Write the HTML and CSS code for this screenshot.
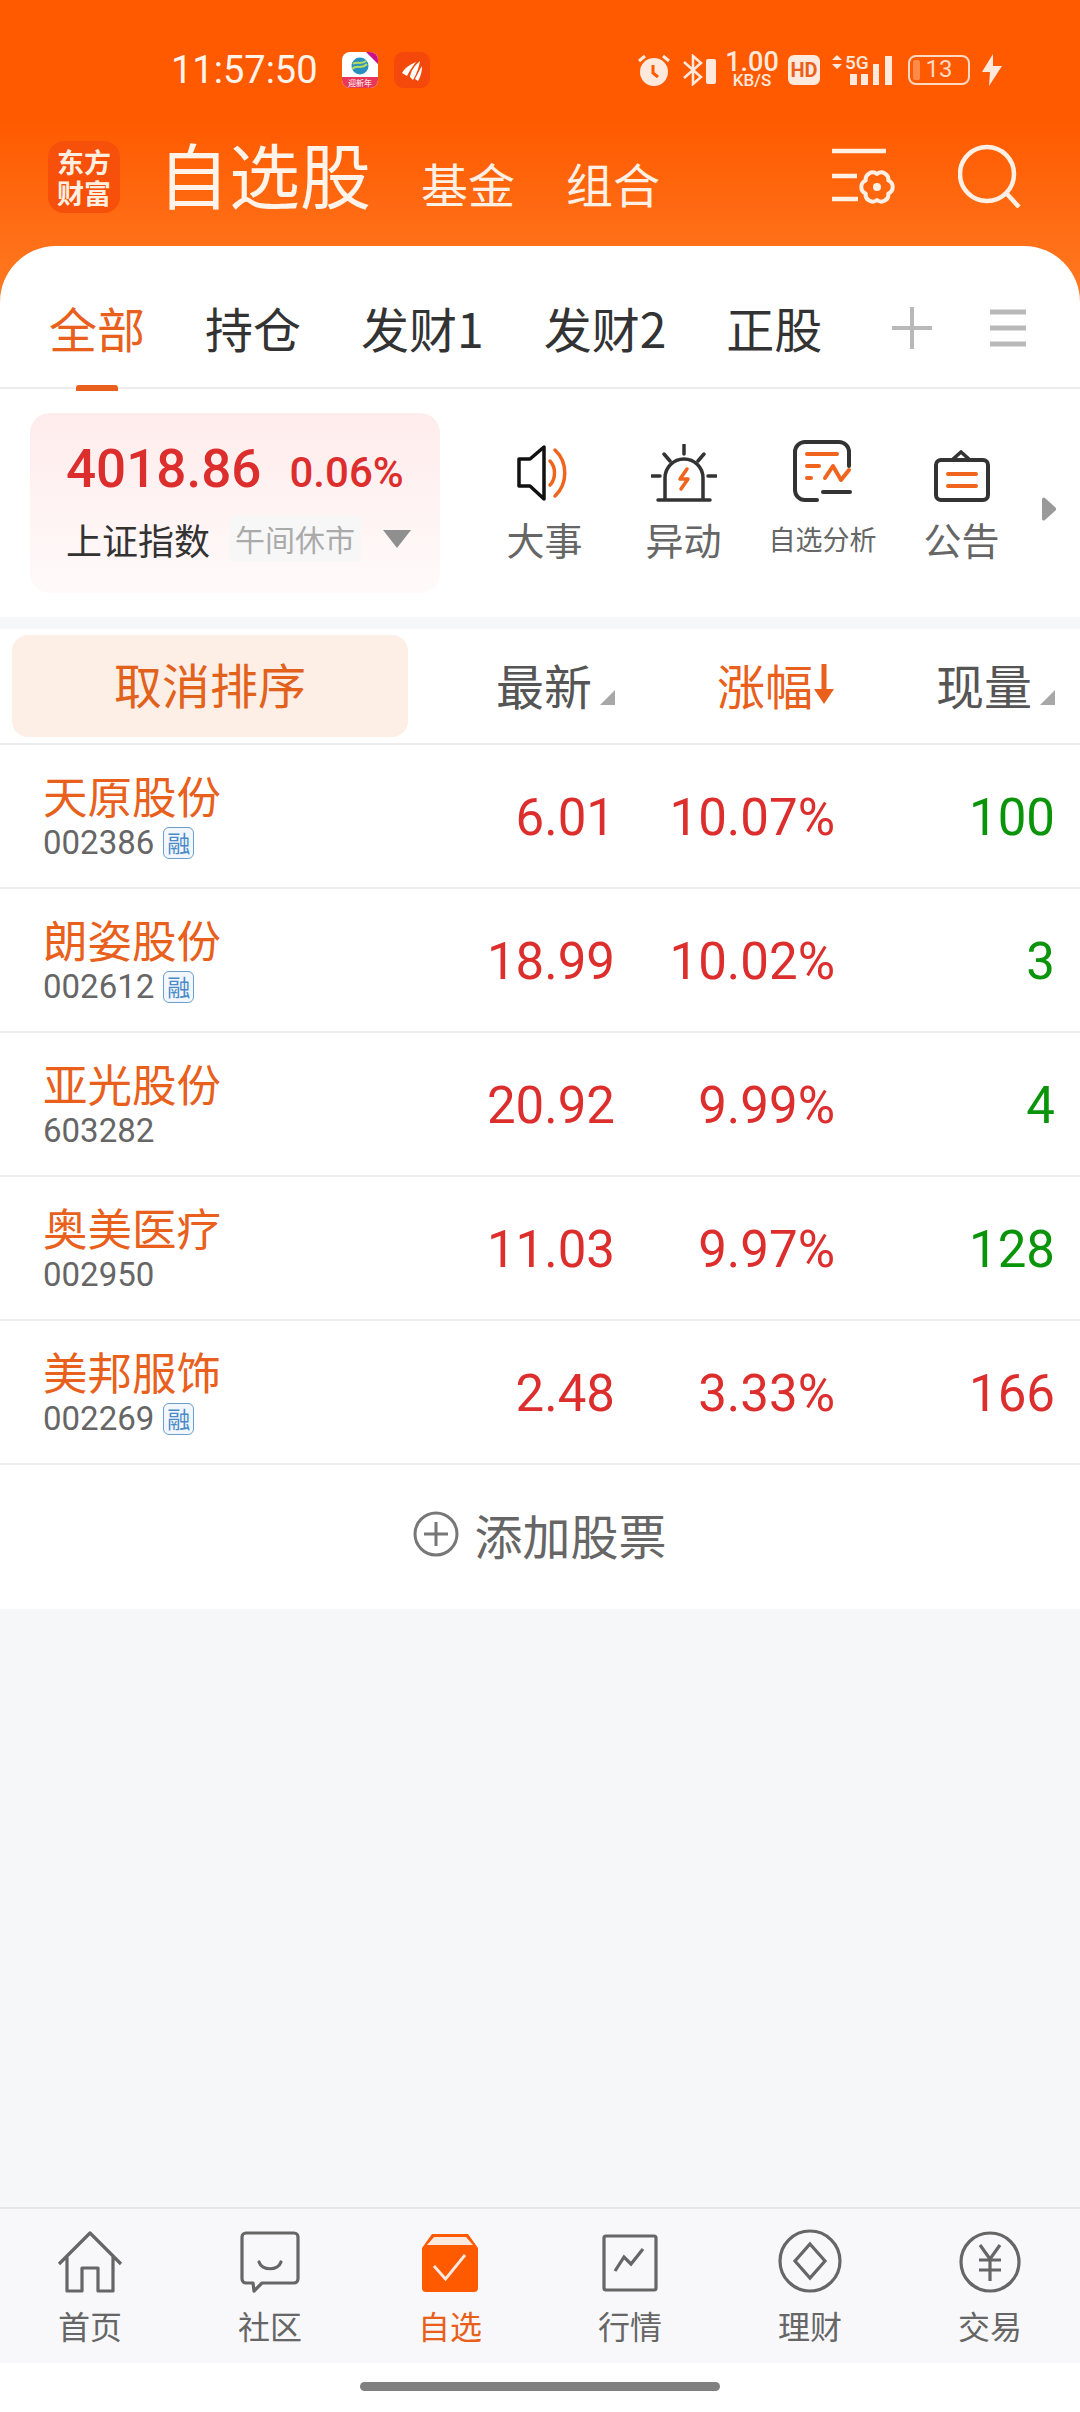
FILE: index.html
```html
<!DOCTYPE html>
<html lang="zh-CN">
<head>
    <meta charset="utf-8"/>
    <title>自选股</title>
    <meta name="viewport" content="width=device-width, initial-scale=1">
    <link rel="stylesheet" href="styles.css">
</head>
<body>
<div class="app">
    <div class="head">
        <!-- status bar -->
        <div class="status">
            <span class="time">11:57:50</span>
            <svg class="notif" width="36" height="36" viewBox="0 0 36 36">
                <rect width="36" height="36" rx="8" fill="#fff"/>
                <path d="M0 25h36v3a8 8 0 0 1-8 8H8a8 8 0 0 1-8-8z" fill="#e8385a"/>
                <path d="M24 0h4a8 8 0 0 1 8 8v4z" fill="#c8108a"/>
                <circle cx="18" cy="14" r="8.500" fill="#2a8fc0"/>
                <path d="M10 17c5-5 9 1 15-5M11 12c4-3 8 1 13-3" fill="none" stroke="#b8dc5a" stroke-width="2"/>
                <text class="notif-text" x="18" y="33.500">迎新年</text>
            </svg>
            <svg class="notif" width="36" height="36" viewBox="0 0 36 36">
                <rect width="36" height="36" rx="9" fill="#f4490a"/>
                <path d="M8 21c3-5 7-8 14-11-3 4-6 8-9 14zM16 25c1-6 4-11 10-16-1 6-3 12-7 19zM21 27c2-4 4-8 7-13 0 5-1 10-4 15z" fill="#fff"/>
            </svg>
            <div class="status-right">
                <svg width="32" height="32" viewBox="0 0 32 32">
                    <circle cx="16" cy="18" r="14" fill="#ffe9dc"/>
                    <path d="M15 11v8l5 4" fill="none" stroke="#ff5a00" stroke-width="3"/>
                    <path d="M1 7l6-5M31 7l-6-5" stroke="#ffe9dc" stroke-width="3"/>
                </svg>
                <svg class="bt" width="34" height="32" viewBox="0 0 34 32">
                    <path d="M2 8l17 15-8 7V2l8 7L2 24" fill="none" stroke="#ffe9dc" stroke-width="2.500"/>
                    <rect x="24" y="5" width="10" height="25" rx="2" fill="#ffe9dc"/>
                </svg>
                <span class="speed"><b>1.00</b><i>KB/S</i></span>
                <span class="hd">HD</span>
                <svg class="signal" width="60" height="36" viewBox="0 -4 60 36">
                    <path d="M0 6l5-5 5 5zM0 10l5 5 5-5z" fill="#ffe9dc"/>
                    <text class="g5" x="13" y="15">5G</text>
                    <rect x="18" y="20" width="7" height="11" fill="#ffe9dc"/>
                    <rect x="29" y="20" width="7" height="11" fill="#ffe9dc"/>
                    <rect x="41" y="10" width="6" height="21" fill="#ffe9dc"/>
                    <rect x="53" y="2" width="7" height="29" fill="#ffe9dc"/>
                </svg>
                <span class="battery"><span class="battery-fill"></span>13</span>
                <svg class="bolt" width="20" height="32" viewBox="0 0 20 32">
                    <path d="M11 0L0 18h8l-1 14L20 12h-9z" fill="#ffe9dc"/>
                </svg>
            </div>
        </div>

        <!-- title bar -->
        <div class="titlebar">
            <div class="logo">东方<br>财富</div>
            <span class="title">自选股</span>
            <span class="subtitle first">基金</span>
            <span class="subtitle">组合</span>
            <svg class="title-icon" width="66" height="56" viewBox="0 0 66 56">
                <path d="M1 3h54M1 28h25M1 51h26" stroke="#fff0e6" stroke-width="4.500"/>
                <path d="M46 26a7 7 0 0 1 11.300 6.500a7 7 0 0 1 0 13a7 7 0 0 1-11.300 6.500a7 7 0 0 1-11.300-6.500a7 7 0 0 1 0-13a7 7 0 0 1 11.300-6.500z" fill="none" stroke="#fff0e6" stroke-width="4" stroke-linejoin="round"/>
                <circle cx="46" cy="39" r="4" fill="#fff0e6"/>
            </svg>
            <svg class="title-icon search" width="64" height="64" viewBox="0 0 64 64">
                <circle cx="29" cy="30" r="27" fill="none" stroke="#fff0e6" stroke-width="4.500"/>
                <path d="M49 50l12 13" stroke="#fff0e6" stroke-width="4.500"/>
            </svg>
        </div>

        <!-- group tabs -->
        <div class="tabs">
            <span class="tab tab-on">全部</span>
            <span class="tab">持仓</span>
            <span class="tab">发财1</span>
            <span class="tab">发财2</span>
            <span class="tab">正股</span>
            <svg class="tab-plus" width="40" height="42" viewBox="0 0 40 42">
                <path d="M20 0v42M0 21h40" stroke="#b9b9b9" stroke-width="4"/>
            </svg>
            <svg class="tab-menu" width="36" height="38" viewBox="0 0 36 38">
                <path d="M0 3h36M0 19h36M0 35h36" stroke="#b9b9b9" stroke-width="5"/>
            </svg>
        </div>
    </div>

    <!-- index card and shortcuts -->
    <div class="market">
        <div class="index-card">
            <div class="index-nums"><span class="index-val">4018.86</span><span class="index-pct">0.06%</span></div>
            <div class="index-info">
                <span class="index-name">上证指数</span>
                <span class="index-tag">午间休市</span>
                <span class="index-caret"></span>
            </div>
        </div>
        <div class="shortcuts">
            <div class="shortcut">
                <svg width="56" height="58" viewBox="0 0 56 58">
                    <path d="M2 15h11L27 3v52L13 42H2z" fill="none" stroke="#111" stroke-width="3.500" stroke-linejoin="round"/>
                    <path d="M33 17c6 6 6 18 0 24M38 6c13 12 13 34 0 46" fill="none" stroke="#f0641e" stroke-width="3.500" stroke-linecap="round"/>
                </svg>
                <span>大事</span>
            </div>
            <div class="shortcut">
                <svg width="66" height="58" viewBox="0 0 66 58">
                    <path d="M33 1v9M13 10l6 7M53 10l-6 7M1 32h8M57 32h8M7 56h52" stroke="#333" stroke-width="3.500" stroke-linecap="round"/>
                    <path d="M14 55V34a19 19 0 0 1 38 0v21" fill="none" stroke="#333" stroke-width="3.500"/>
                    <path d="M36 25l-7 10h8l-7 10" fill="none" stroke="#f0641e" stroke-width="3.500" stroke-linecap="round" stroke-linejoin="round"/>
                </svg>
                <span>异动</span>
            </div>
            <div class="shortcut">
                <svg width="60" height="62" viewBox="0 0 60 62">
                    <path d="M24 60H12a10 10 0 0 1-10-10V12A10 10 0 0 1 12 2h34a10 10 0 0 1 10 10v14M30 52h27" fill="none" stroke="#333" stroke-width="4" stroke-linecap="round"/>
                    <path d="M14 14h30M14 26h12M14 38h4M32 38l8-12 8 14 8-10" fill="none" stroke="#f0641e" stroke-width="4" stroke-linecap="round" stroke-linejoin="round"/>
                </svg>
                <span class="shortcut-small">自选分析</span>
            </div>
            <div class="shortcut">
                <svg width="56" height="52" viewBox="0 0 56 52">
                    <path d="M18 10L27 2l9 8" fill="none" stroke="#333" stroke-width="3.500"/>
                    <rect x="2" y="10" width="52" height="40" rx="5" fill="none" stroke="#333" stroke-width="4"/>
                    <path d="M14 24h28M14 36h28" stroke="#f0641e" stroke-width="4" stroke-linecap="round"/>
                </svg>
                <span>公告</span>
            </div>
            <svg class="more" width="16" height="24" viewBox="0 0 16 24">
                <path d="M1 2a2 2 0 0 1 3-1l11 10v2L4 23a2 2 0 0 1-3-1z" fill="#9a9a9a"/>
            </svg>
        </div>
    </div>
    <div class="band"></div>

    <!-- table head -->
    <div class="thead">
        <div class="sort-btn">取消排序</div>
        <div class="th">最新<span class="th-mark"></span></div>
        <div class="th th-on">涨幅<svg width="22" height="42" viewBox="0 0 22 42"><path d="M11 1v30" stroke="#e8601c" stroke-width="5"/><path d="M1 26h20L11 41z" fill="#e8601c"/></svg></div>
        <div class="th">现量<span class="th-mark"></span></div>
    </div>

    <!-- stocks -->
    <div class="row">
        <div class="stock"><div class="stock-name">天原股份</div><div class="stock-code">002386<span class="rong">融</span></div></div>
        <div class="num">6.01</div><div class="num">10.07%</div><div class="num up">100</div>
    </div>
    <div class="row">
        <div class="stock"><div class="stock-name">朗姿股份</div><div class="stock-code">002612<span class="rong">融</span></div></div>
        <div class="num">18.99</div><div class="num">10.02%</div><div class="num up">3</div>
    </div>
    <div class="row">
        <div class="stock"><div class="stock-name">亚光股份</div><div class="stock-code">603282</div></div>
        <div class="num">20.92</div><div class="num">9.99%</div><div class="num up">4</div>
    </div>
    <div class="row">
        <div class="stock"><div class="stock-name">奥美医疗</div><div class="stock-code">002950</div></div>
        <div class="num">11.03</div><div class="num">9.97%</div><div class="num up">128</div>
    </div>
    <div class="row">
        <div class="stock"><div class="stock-name">美邦服饰</div><div class="stock-code">002269<span class="rong">融</span></div></div>
        <div class="num">2.48</div><div class="num">3.33%</div><div class="num">166</div>
    </div>
    <div class="add">
        <svg width="46" height="46" viewBox="0 0 46 46">
            <circle cx="23" cy="23" r="21" fill="none" stroke="#777" stroke-width="3"/>
            <path d="M23 11v24M11 23h24" stroke="#777" stroke-width="3"/>
        </svg>
        添加股票
    </div>

    <div class="spacer"></div>

    <!-- bottom nav -->
    <div class="nav">
        <div class="nav-item">
            <svg width="66" height="62" viewBox="0 0 66 62">
                <path d="M2 33L33 2l31 31M10 25v35h15V37h16v23h15V25" fill="none" stroke="#666" stroke-width="3.200" stroke-linejoin="round"/>
            </svg>
            <span>首页</span>
        </div>
        <div class="nav-item">
            <svg width="60" height="62" viewBox="0 0 60 62">
                <path d="M6 2h48a4 4 0 0 1 4 4v42a4 4 0 0 1-4 4H22l-8 8-1-8H6a4 4 0 0 1-4-4V6a4 4 0 0 1 4-4z" fill="none" stroke="#666" stroke-width="3.200" stroke-linejoin="round"/>
                <path d="M19 31c3 9 19 9 22 0" fill="none" stroke="#666" stroke-width="3.200" stroke-linecap="round"/>
            </svg>
            <span>社区</span>
        </div>
        <div class="nav-item nav-on">
            <svg width="60" height="60" viewBox="0 0 60 60">
                <path d="M12 1h36l10 14v40a4 4 0 0 1-4 4H6a4 4 0 0 1-4-4V15z" fill="#ff5a00"/>
                <path d="M7 12l7-8h32l7 8z" fill="#fbe9df"/>
                <path d="M14 33l11.500 13L45 22" fill="none" stroke="#fbe9df" stroke-width="2.800"/>
            </svg>
            <span>自选</span>
        </div>
        <div class="nav-item">
            <svg width="60" height="60" viewBox="0 0 60 60">
                <rect x="4" y="3" width="52" height="54" rx="2" fill="none" stroke="#666" stroke-width="3.200"/>
                <path d="M15 38l9-14 7 7 12-15" fill="none" stroke="#666" stroke-width="3.200"/>
            </svg>
            <span>行情</span>
        </div>
        <div class="nav-item">
            <svg width="64" height="64" viewBox="0 0 64 64">
                <circle cx="32" cy="32" r="30" fill="none" stroke="#666" stroke-width="3.200"/>
                <path d="M32 15l15 17-15 17-15-17z" fill="none" stroke="#666" stroke-width="3.200"/>
            </svg>
            <span>理财</span>
        </div>
        <div class="nav-item">
            <svg width="62" height="62" viewBox="0 0 62 62">
                <circle cx="31" cy="31" r="29" fill="none" stroke="#666" stroke-width="3.200"/>
                <path d="M21 14l10 14 10-14M20 29h22M20 39h22M31 28v22" fill="none" stroke="#666" stroke-width="3.200"/>
            </svg>
            <span>交易</span>
        </div>
    </div>
    <div class="gesture"><div class="gesture-bar"></div></div>
</div>
</body>
</html>
```

FILE: styles.css
```css
html {
    font-family: "Noto Sans CJK SC", Roboto, sans-serif;
}
body {
    margin: 0;
}
.app {
    width: 1080px;
    height: 2412px;
    display: flex;
    flex-direction: column;
    background: #f6f7f9;
    overflow: hidden;
}

/* header */
.head {
    background: linear-gradient(#ff5a00 0, #ff5a00 120px, #ff7d26 320px);
}
.status {
    height: 52px;
    padding: 44px 78px 0 171px;
    display: flex;
    align-items: center;
    color: #fff3ea;
}
.time {
    font-family: Roboto, sans-serif;
    font-size: 38px;
    margin-right: 8px;
}
.notif {
    margin-left: 16px;
}
.notif-text {
    font-size: 8px;
    text-anchor: middle;
    fill: #fff;
}
.status-right {
    margin-left: auto;
    display: flex;
    align-items: center;
    gap: 12px;
}
.signal {
    margin-top: -4px;
}
.speed {
    display: flex;
    flex-direction: column;
    align-items: center;
    font-family: Roboto, sans-serif;
    color: #ffe9dc;
    width: 48px;
}
.speed b {
    font-size: 27px;
    font-weight: 500;
    line-height: 21px;
}
.speed i {
    font-size: 17px;
    font-style: normal;
    font-weight: 500;
    line-height: 15px;
}
.hd {
    width: 32px;
    height: 30px;
    line-height: 30px;
    text-align: center;
    background: #ffe9dc;
    border-radius: 6px;
    color: #e8601c;
    font-family: Roboto, sans-serif;
    font-weight: 700;
    font-size: 20px;
}
.g5 {
    font-family: Roboto, sans-serif;
    font-weight: 500;
    font-size: 19px;
    fill: #ffe9dc;
}
.battery {
    position: relative;
    width: 62px;
    height: 30px;
    box-sizing: border-box;
    border: 2.5px solid #ffd9c2;
    border-radius: 8px;
    margin-left: 4px;
    text-align: center;
    font-family: Roboto, sans-serif;
    font-size: 24px;
    line-height: 25px;
    color: #ffd9c2;
}
.battery-fill {
    position: absolute;
    left: 3px;
    top: 3px;
    bottom: 3px;
    width: 7px;
    background: #ff8a4a;
    border-radius: 2px;
}
.titlebar {
    height: 138px;
    padding: 12px 58px 0 48px;
    display: flex;
    align-items: center;
}
.logo {
    width: 72px;
    height: 72px;
    border-radius: 16px;
    background: #f7500a;
    color: #ffefe0;
    font-size: 27px;
    font-weight: 700;
    line-height: 31px;
    text-align: center;
    padding-top: 5px;
    box-sizing: border-box;
}
.title {
    font-size: 71px;
    line-height: 72px;
    color: #fff3ea;
    margin-left: 38px;
    margin-top: -10px;
}
.subtitle {
    font-size: 47px;
    color: #fff0e6;
    margin-left: 51px;
    margin-top: 11px;
}
.subtitle.first {
    margin-left: 50px;
}
.title-icon {
    margin-left: auto;
    margin-top: -3px;
}
.title-icon.search {
    margin-left: 61px;
}
.tabs {
    height: 141px;
    background: #fff;
    border-radius: 56px 56px 0 0;
    border-bottom: 2px solid #ececec;
    padding-left: 49px;
    display: flex;
    align-items: center;
    gap: 60px;
    font-size: 48px;
    line-height: 68px;
    color: #333;
}
.tab {
    margin-top: 21px;
}
.tab-on {
    color: #e8601c;
    position: relative;
}
.tab-on::after {
    content: "";
    position: absolute;
    left: 27px;
    bottom: -30px;
    width: 42px;
    height: 6px;
    border-radius: 3px 3px 0 0;
    background: #e8601c;
}
.tab-plus {
    margin-left: 10px;
    margin-top: 22px;
}
.tab-menu {
    margin-left: -2px;
    margin-top: 22px;
}

/* index card and shortcuts */
.market {
    height: 228px;
    background: #fff;
    padding: 24px 0 0 30px;
    box-sizing: border-box;
    display: flex;
    align-items: flex-start;
}
.index-card {
    width: 410px;
    height: 180px;
    border-radius: 20px;
    background: linear-gradient(#ffecec, #fffafa);
    padding: 25px 0 0 36px;
    box-sizing: border-box;
}
.index-nums {
    display: flex;
    align-items: baseline;
    font-family: Roboto, sans-serif;
    font-weight: 500;
    color: #dd2e2e;
}
.index-val {
    font-size: 53px;
}
.index-pct {
    font-size: 42px;
    margin-left: 28px;
}
.index-info {
    display: flex;
    align-items: center;
    margin-top: 13px;
}
.index-name {
    font-size: 36px;
    color: #333;
}
.index-tag {
    margin-left: 19px;
    padding: 0 6px;
    height: 46px;
    line-height: 44px;
    background: #f7f7f8;
    border-radius: 6px;
    font-size: 30px;
    color: #aaa;
}
.index-caret {
    margin-left: 22px;
    border-left: 14px solid transparent;
    border-right: 14px solid transparent;
    border-top: 18px solid #8f8f8f;
}
.shortcuts {
    flex: 1;
    display: flex;
    position: relative;
    padding: 21px 0 0 35px;
}
.shortcut {
    width: 139px;
    height: 130px;
    display: flex;
    flex-direction: column;
    align-items: center;
    justify-content: flex-end;
    font-size: 38px;
    color: #666;
    line-height: 50px;
}
.shortcut svg {
    margin-bottom: 12px;
}
.shortcut-small {
    font-size: 27px;
}
.more {
    position: absolute;
    left: 601px;
    top: 84px;
}
.band {
    height: 12px;
    background: #f6f7f9;
}

/* table */
.thead {
    height: 114px;
    background: #fff;
    border-bottom: 2px solid #ececec;
    padding-left: 12px;
    display: grid;
    grid-template-columns: 396px 207px 220px 220px;
    align-items: center;
    font-size: 48px;
    line-height: 62px;
    color: #555;
}
.sort-btn {
    height: 102px;
    line-height: 97px;
    background: #fdeee6;
    border-radius: 16px;
    text-align: center;
    color: #e2621c;
}
.th {
    text-align: right;
    margin-top: -5px;
}
.th-on {
    color: #e8601c;
    display: flex;
    justify-content: flex-end;
    align-items: center;
}
.th-mark {
    display: inline-block;
    width: 0;
    height: 0;
    margin-left: 8px;
    border-left: 15px solid transparent;
    border-bottom: 15px solid #a8a8a8;
}
.row {
    height: 142px;
    background: #fff;
    border-bottom: 2px solid #efefef;
    padding: 0 25px 0 43px;
    display: grid;
    grid-template-columns: 1fr 170px 220px 220px;
    align-items: center;
}
.stock {
    margin-top: -3px;
}
.stock-name {
    font-size: 44.5px;
    line-height: 52px;
    color: #e8601c;
}
.stock-code {
    display: flex;
    align-items: center;
    font-family: Roboto, sans-serif;
    font-size: 33px;
    line-height: 36px;
    color: #666;
    margin-top: 4px;
}
.rong {
    width: 31px;
    height: 32px;
    margin-left: 9px;
    box-sizing: border-box;
    border: 1.5px solid #6a9fd0;
    border-radius: 6px;
    background: #f1f7fd;
    color: #4a8ac8;
    font-family: "Noto Sans CJK SC", sans-serif;
    font-size: 23px;
    line-height: 28px;
    text-align: center;
}
.num {
    text-align: right;
    font-family: Roboto, sans-serif;
    font-size: 51px;
    color: #dd2e2e;
    margin-top: 2px;
}
.num.up {
    color: #0a940a;
}
.add {
    height: 144px;
    background: #fff;
    display: flex;
    align-items: center;
    justify-content: center;
    gap: 15px;
    font-size: 48px;
    padding-bottom: 6px;
    box-sizing: border-box;
    color: #666;
}
.spacer {
    flex: 1;
}

/* bottom nav */
.nav {
    height: 154px;
    background: #f8f8fa;
    border-top: 2px solid #e6e6e6;
    display: flex;
}
.nav-item {
    flex: 1;
    display: flex;
    flex-direction: column;
    align-items: center;
    justify-content: flex-end;
    font-size: 32px;
    line-height: 40px;
    color: #666;
    padding-bottom: 18px;
}
.nav-item svg {
    margin-bottom: 12px;
}
.nav-on {
    color: #e8601c;
}
.gesture {
    height: 49px;
    background: #fff;
    display: flex;
    justify-content: center;
    padding-top: 19px;
    box-sizing: border-box;
}
.gesture-bar {
    width: 360px;
    height: 9px;
    border-radius: 5px;
    background: #808080;
}
```
